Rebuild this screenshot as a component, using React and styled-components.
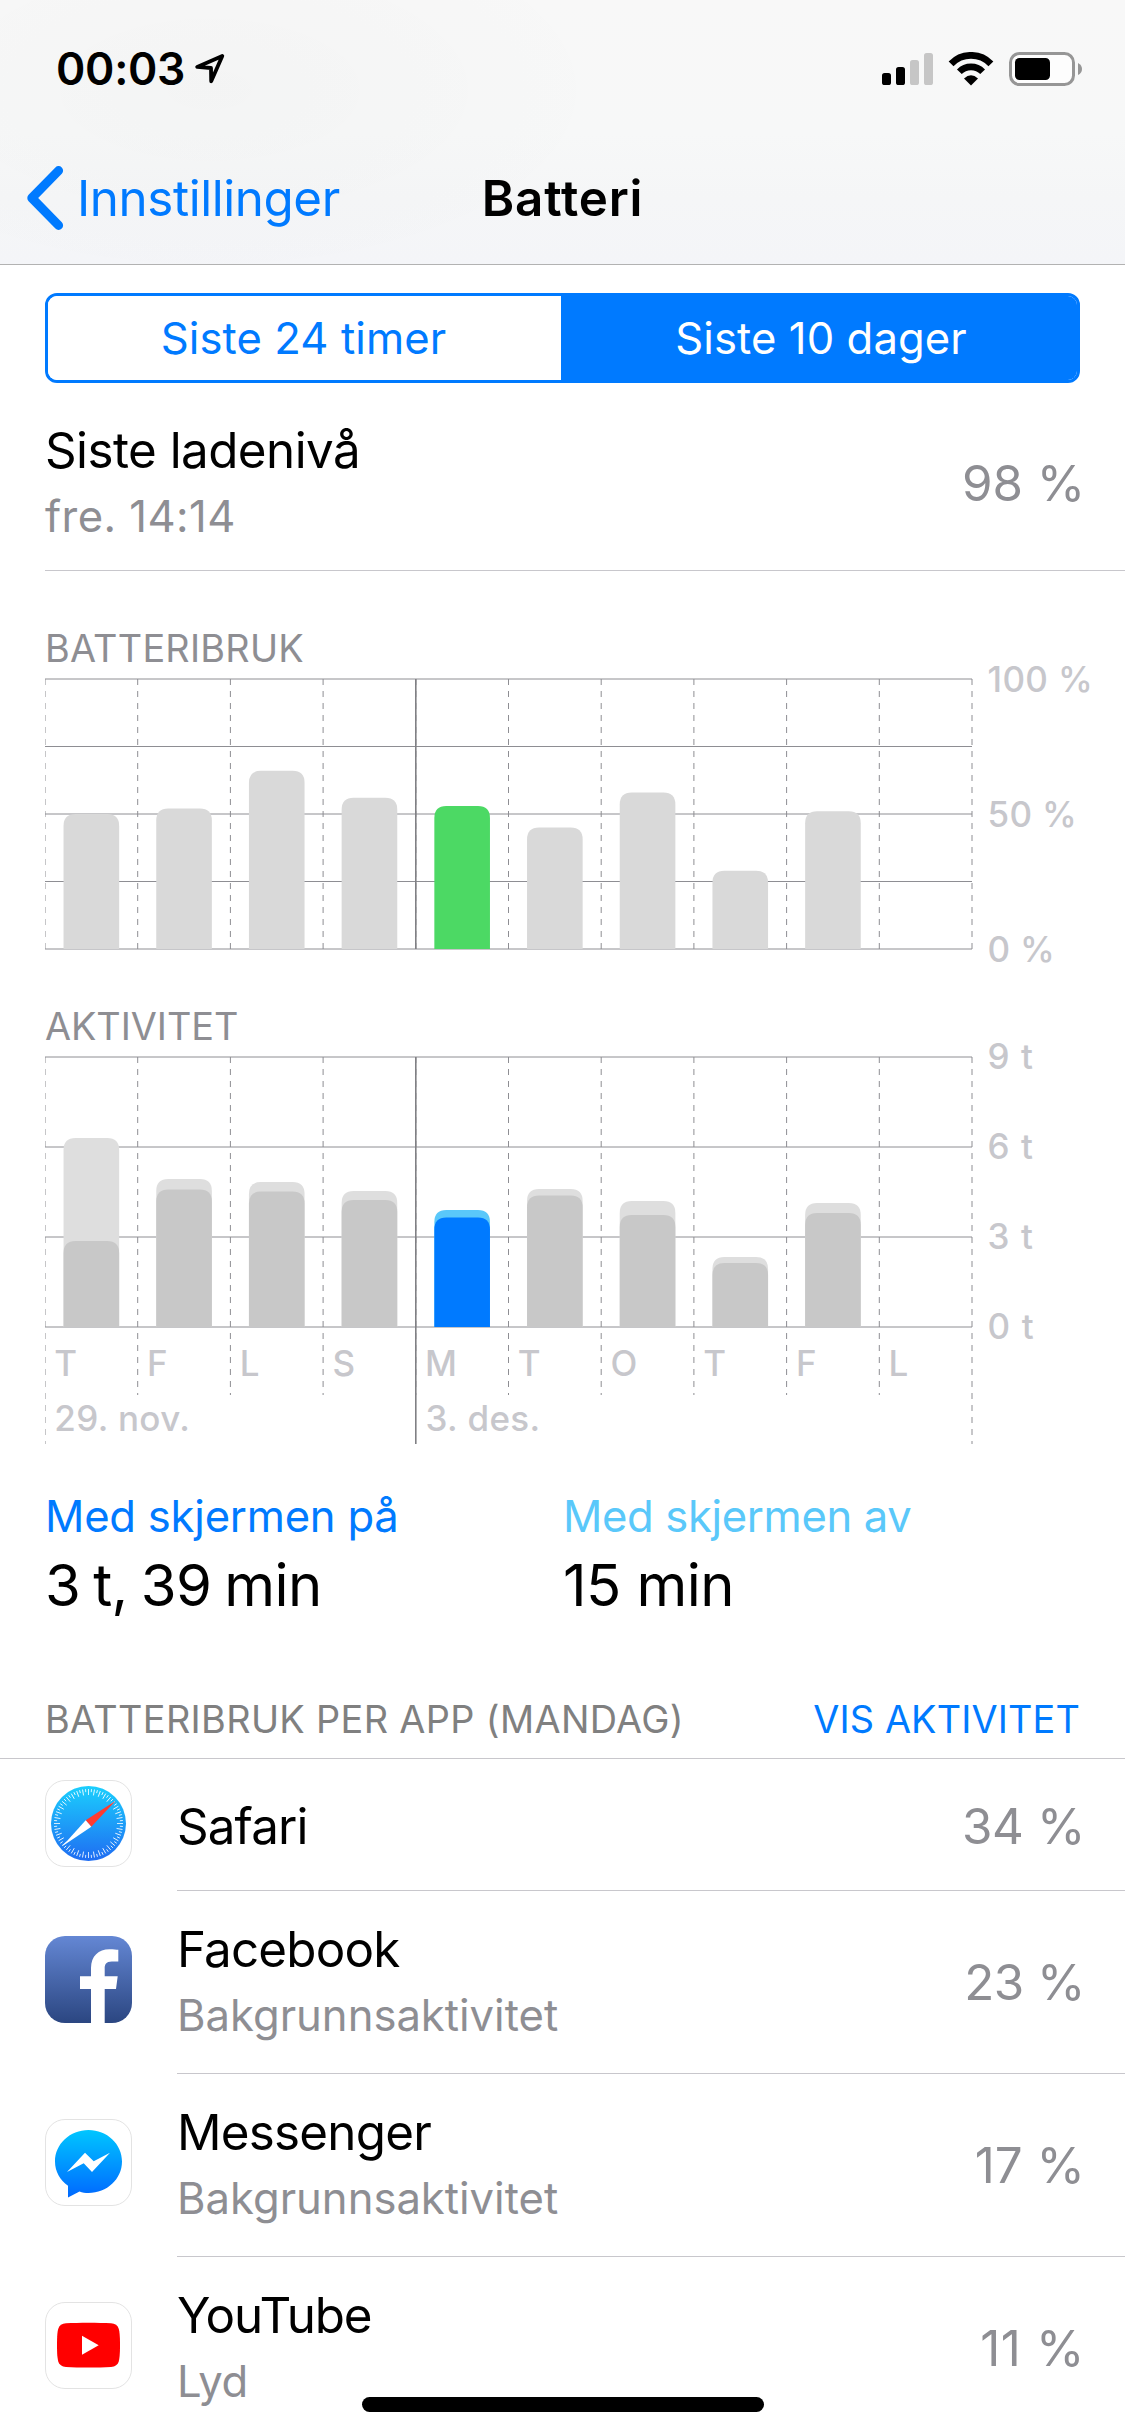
import React, { useState } from 'react'
import styled, { createGlobalStyle } from 'styled-components'

const GlobalStyle = createGlobalStyle`
  body {
    margin: 0;
    background: #fff;
    color: #000;
    font-family: Inter, "Liberation Sans", sans-serif;
  }
`

const Screen = styled.div`
  position: relative;
  width: 1125px;
  height: 2436px;
  overflow: hidden;
  background: #fff;
`

const Header = styled.header`
  border-bottom: 1px solid #b2b2b2;
  background:
    radial-gradient(ellipse 420px 200px at 210px 90px, rgba(0, 0, 0, 0.014), rgba(0, 0, 0, 0)),
    linear-gradient(#f8f8f8, #f7f8f8 50%, #f5f6f7 75%, #f4f5f8);
`

const StatusBar = styled.div`
  display: flex;
  align-items: center;
  height: 126px;
  padding: 6px 42px 0 56px;
`

const Time = styled.span`
  font-size: 44.5px;
  font-weight: 600;
  line-height: 54px;
  letter-spacing: -0.29px;
`

const LocationIcon = styled.svg`
  width: 32px;
  height: 32px;
  margin-left: 9px;
`

const StatusIcons = styled.div`
  display: flex;
  align-items: center;
  gap: 15px;
  margin-left: auto;

  svg {
    display: block;
  }
`

const NavBar = styled.nav`
  display: grid;
  grid-template-columns: 1fr auto 1fr;
  align-items: center;
  height: 132px;
  padding: 0 26px;
`

const BackButton = styled.a`
  display: flex;
  align-items: center;
  gap: 12px;
  color: #007aff;
  font-size: 49.3px;
  line-height: 60px;
  letter-spacing: -0.4px;
`

const NavTitle = styled.h1`
  margin: 0;
  font-size: 49.3px;
  font-weight: 600;
  line-height: 60px;
  letter-spacing: 0.85px;
`

const Segmented = styled.div`
  display: flex;
  box-sizing: border-box;
  height: 90px;
  margin: 28px 45px 0;
  border: 3px solid #007aff;
  border-radius: 12px;
  overflow: hidden;
`

const Segment = styled.button`
  flex: 1;
  padding: 2px 0 0 4px;
  border: 0;
  background: ${(p) => (p.$active ? '#007aff' : '#fff')};
  color: ${(p) => (p.$active ? '#fff' : '#007aff')};
  font-family: inherit;
  font-size: 43.6px;
  line-height: 82px;
  letter-spacing: 0.1px;

  &:first-child {
    flex: 0 0 513px;
    padding: 2px 2px 0 0;
  }
`

const LastCharge = styled.div`
  display: flex;
  justify-content: space-between;
  align-items: center;
  margin-left: 45px;
  padding: 37px 45px 25px 0;
  border-bottom: 1px solid #c8c7cc;
`

const Texts = styled.div`
  display: flex;
  flex-direction: column;
  gap: 9px;
`

const Title = styled.div`
  font-size: 49.3px;
  line-height: 60px;
  letter-spacing: ${(p) => p.$ls || 0}px;
`

const Subtitle = styled.div`
  color: #8e8e93;
  font-size: 43.6px;
  line-height: 56px;
  letter-spacing: ${(p) => p.$ls || 0}px;
`

const Percent = styled.div`
  margin-right: -5px;
  color: #8e8e93;
  font-size: 49.3px;
  line-height: 60px;
  letter-spacing: ${(p) => p.$ls || 0}px;
`

const ChartBlock = styled.section`
  padding: 53px 45px 0;
`

const ChartTitle = styled.h2`
  margin: 0 0 7px;
  color: #8e8e93;
  font-size: 37.8px;
  font-weight: 400;
  line-height: 48px;
  letter-spacing: ${(p) => p.$ls || 0}px;
`

const ChartSvg = styled.svg`
  display: block;
  width: 1080px;
  overflow: visible;

  text {
    fill: #c7c7cc;
    font-size: 35px;
    font-weight: 500;
    letter-spacing: 0.35px;
  }
`

const Stats = styled.div`
  display: grid;
  grid-template-columns: 518px 1fr;
  padding: 45px 45px 0;
`

const StatLabel = styled.div`
  color: ${(p) => p.$color};
  font-size: 43.6px;
  line-height: 56px;
  letter-spacing: ${(p) => p.$ls}px;
`

const StatValue = styled.div`
  margin-top: 5px;
  font-size: 58px;
  line-height: 70px;
  letter-spacing: ${(p) => p.$ls}px;
  word-spacing: ${(p) => p.$ws || 0}px;
`

const ListHeader = styled.div`
  display: flex;
  justify-content: space-between;
  padding: 75px 45px 15px;
  border-bottom: 1px solid #c8c7cc;
  color: #808080;
  font-size: 37.8px;
  line-height: 48px;
  letter-spacing: 0.36px;
`

const ListAction = styled.a`
  color: #007aff;
  letter-spacing: 0.15px;
`

const AppRow = styled.div`
  display: flex;
  align-items: center;
  height: ${(p) => (p.$tall ? 183 : 132)}px;
  padding-left: 45px;

  > svg {
    flex: none;
    margin-bottom: ${(p) => (p.$tall ? 6 : 3)}px;
  }
`

const AppBody = styled.div`
  display: flex;
  flex: 1;
  align-items: center;
  justify-content: space-between;
  box-sizing: border-box;
  height: 100%;
  margin-left: 45px;
  padding-right: 45px;
  border-bottom: 1px solid #c8c7cc;

  ${Texts} {
    margin-bottom: ${(p) => (p.$tall ? 1 : 0)}px;
    margin-top: ${(p) => (p.$tall ? 0 : 3)}px;
  }

  ${Percent} {
    margin-top: ${(p) => (p.$tall ? 0 : 3)}px;
  }
`

const HomeIndicator = styled.div`
  position: absolute;
  left: 362px;
  bottom: 24px;
  width: 402px;
  height: 15px;
  border-radius: 8px;
  background: #000;
`

const COL = 92.7
const BAR = COL * 0.6
const WIDTH = COL * 10
const CHART_H = 270

// percent per day
const usage = [50, 52, 66, 56, 53, 45, 58, 29, 51]

// minutes per day: [screen on, total]
const activity = [
  [172, 378],
  [275, 296],
  [271, 290],
  [254, 272],
  [219, 234],
  [263, 276],
  [224, 252],
  [128, 140],
  [228, 248],
]

const days = ['T', 'F', 'L', 'S', 'M', 'T', 'O', 'T', 'F', 'L']
const SELECTED = 4

function Bar({ index, height, fill }) {
  const x = COL * index + COL * 0.2
  const y = CHART_H - height
  const r = 12
  return (
    <path
      fill={fill}
      d={`M${x} ${CHART_H}V${y + r}Q${x} ${y} ${x + r} ${y}H${x + BAR - r}Q${x + BAR} ${y} ${x + BAR} ${y + r}V${CHART_H}Z`}
    />
  )
}

function Grid({ rows, dayEnd, edgeEnd }) {
  return (
    <g stroke="#8e8e93" strokeWidth="1">
      {Array.from({ length: rows + 1 }, (_, i) => {
        const y = (CHART_H / rows) * i
        return <line key={`h${i}`} x1="0" x2={WIDTH} y1={y} y2={y} />
      })}
      {Array.from({ length: 11 }, (_, i) => (
        <line
          key={`v${i}`}
          x1={COL * i || 0.5}
          x2={COL * i || 0.5}
          y1="0"
          y2={i === 0 || i === 10 ? edgeEnd : dayEnd}
          strokeDasharray="6 6"
          opacity={i === 0 ? 0.5 : 1}
        />
      ))}
      <line x1={COL * SELECTED} x2={COL * SELECTED} y1="0" y2={edgeEnd} stroke="#808084" strokeWidth="1.6" />
    </g>
  )
}

function UsageChart() {
  return (
    <ChartSvg height="270">
      <Grid rows={4} dayEnd={270} edgeEnd={270} />
      {usage.map((v, i) => (
        <Bar key={i} index={i} height={v * 2.7} fill={i === SELECTED ? '#4cd964' : '#d9d9d9'} />
      ))}
      <text x="942.5" y="12.5">100 %</text>
      <text x="942.5" y="147.5">50 %</text>
      <text x="942.5" y="282.5">0 %</text>
    </ChartSvg>
  )
}

function ActivityChart() {
  return (
    <ChartSvg height="387">
      <Grid rows={3} dayEnd={338} edgeEnd={387} />
      {activity.map(([on, total], i) => (
        <g key={i}>
          <Bar index={i} height={total / 2} fill={i === SELECTED ? '#5ac8fa' : '#dedede'} />
          <Bar index={i} height={on / 2} fill={i === SELECTED ? '#007aff' : '#c8c8c8'} />
        </g>
      ))}
      {[9, 6, 3, 0].map((h, i) => (
        <text key={h} x="942.5" y={i * 90 + 12} wordSpacing="1.5">{h} t</text>
      ))}
      {days.map((d, i) => (
        <text key={i} x={COL * i + 9.3} y="319">{d}</text>
      ))}
      <text x="9.3" y="374">29. nov.</text>
      <text x={COL * SELECTED + 9.8} y="374">3. des.</text>
    </ChartSvg>
  )
}

function IconFrame() {
  return <rect x="0.5" y="0.5" width="86" height="86" rx="19.5" fill="#fff" stroke="#e3e3e3" />
}

function SafariIcon() {
  return (
    <svg width="87" height="87" viewBox="0 0 87 87">
      <defs>
        <linearGradient id="safari" x1="0" y1="0" x2="0" y2="1">
          <stop offset="0" stopColor="#1bcffd" />
          <stop offset="1" stopColor="#1f6cf2" />
        </linearGradient>
      </defs>
      <IconFrame />
      <circle cx="43.5" cy="43.5" r="37.5" fill="url(#safari)" />
      <g stroke="#fff" strokeWidth="0.8">
        {Array.from({ length: 72 }, (_, i) => (
          <line
            key={i}
            x1="43.5"
            x2="43.5"
            y1="9"
            y2={i % 2 ? 12 : 15}
            transform={`rotate(${i * 5} 43.5 43.5)`}
          />
        ))}
      </g>
      <path d="M70.7 20.7L40.7 40.3L46.3 46.7Z" fill="#ff3b30" />
      <path d="M17.3 66.3L40.7 40.3L46.3 46.7Z" fill="#fff" />
    </svg>
  )
}

function FacebookIcon() {
  return (
    <svg width="87" height="87" viewBox="0 0 87 87">
      <defs>
        <linearGradient id="facebook" x1="0" y1="0" x2="0" y2="1">
          <stop offset="0" stopColor="#6487d4" />
          <stop offset="1" stopColor="#2b4681" />
        </linearGradient>
      </defs>
      <rect width="87" height="87" rx="20" fill="url(#facebook)" />
      <path
        fill="#fff"
        d="M46 87V53H35V40.3H46V32C46 20 53.5 13.2 64.5 13.2C68.5 13.2 71.5 13.5 73.3 13.8V25.6H66.8C61 25.6 59.7 28.5 59.7 32.5V40.3H72.7L71 53H59.7V87Z"
      />
    </svg>
  )
}

function MessengerIcon() {
  return (
    <svg width="87" height="87" viewBox="0 0 87 87">
      <defs>
        <linearGradient id="messenger" x1="0" y1="0" x2="0" y2="1">
          <stop offset="0" stopColor="#00c6ff" />
          <stop offset="1" stopColor="#0068ff" />
        </linearGradient>
      </defs>
      <IconFrame />
      <path
        fill="url(#messenger)"
        d="M43.5 11C62 11 77 25 77 42.5S62 74 43.5 74C40.3 74 37.3 73.5 34.5 72.5L23 78.6V66.8C15 61 10 52.5 10 42.5C10 25 25 11 43.5 11Z"
      />
      <path fill="#fff" d="M22 53L40 33.7L48.7 42.2L65 33.7L47 53L38.7 44.3Z" />
    </svg>
  )
}

function YouTubeIcon() {
  return (
    <svg width="87" height="87" viewBox="0 0 87 87">
      <IconFrame />
      <path
        fill="#f00"
        d="M12 43.1C12 34 12.4 30 13.2 27C14.2 23.3 17 21.6 21 21.3C34 20.5 53 20.5 66 21.3C70 21.6 72.8 23.3 73.8 27C74.6 30 75 34 75 43.1S74.6 56.2 73.8 59.2C72.8 62.9 70 64.6 66 64.9C53 65.7 34 65.7 21 64.9C17 64.6 14.2 62.9 13.2 59.2C12.4 56.2 12 52.2 12 43.1Z"
      />
      <path fill="#fff" d="M37 33.7L53.7 43.3L37 52.7Z" />
    </svg>
  )
}

const apps = [
  { name: 'Safari', ls: -0.85, percent: '34 %', pls: -0.4, icon: SafariIcon },
  { name: 'Facebook', ls: -0.8, note: 'Bakgrunnsaktivitet', percent: '23 %', pls: -0.5, icon: FacebookIcon },
  { name: 'Messenger', ls: -0.75, note: 'Bakgrunnsaktivitet', percent: '17 %', pls: 0, icon: MessengerIcon },
  { name: 'YouTube', ls: -1.1, note: 'Lyd', nls: -0.4, percent: '11 %', pls: 0.6, icon: YouTubeIcon },
]

function Signal() {
  const heights = [12, 18, 25, 32]
  return (
    <svg width="51" height="34" viewBox="0 0 51 34">
      {heights.map((h, i) => (
        <rect key={h} x={i * 14} y={33 - h} width="9" height={h} rx="2.6" fill={i < 2 ? '#000' : '#c6c6c6'} />
      ))}
    </svg>
  )
}

function Wifi() {
  return (
    <svg width="46" height="34" viewBox="0 0 46 34">
      <g fill="none" stroke="#000">
        <path strokeWidth="6.8" d="M3.1 11.8A27.7 27.7 0 0 1 42.9 11.8" />
        <path strokeWidth="6.6" d="M11.35 19.8A16.2 16.2 0 0 1 34.65 19.8" />
      </g>
      <path d="M16 26.4Q23 20.2 30 26.4L23 33.6Z" />
    </svg>
  )
}

function Battery() {
  return (
    <svg width="74" height="34" viewBox="0 0 74 34">
      <rect x="1.5" y="1.5" width="63" height="31" rx="9" fill="#fdfdfd" stroke="#969696" strokeWidth="3" />
      <rect x="6" y="6" width="35" height="22" rx="4.5" />
      <path d="M69 11Q73 13 73 17T69 23Z" fill="#969696" />
    </svg>
  )
}

function App() {
  const [range, setRange] = useState('10d')

  return (
    <Screen>
      <GlobalStyle />
      <Header>
        <StatusBar>
          <Time>00:03</Time>
          <LocationIcon viewBox="0 0 32 32">
            <path
              d="M28.3 3L3.2 13.9L17 15L17.2 28.3Z"
              fill="none"
              stroke="#000"
              strokeWidth="3.8"
              strokeLinejoin="round"
            />
          </LocationIcon>
          <StatusIcons>
            <Signal />
            <Wifi />
            <Battery />
          </StatusIcons>
        </StatusBar>
        <NavBar>
          <BackButton>
            <svg width="39" height="66" viewBox="0 0 39 66">
              <path
                d="M32.6 5.6L5.8 33L32.6 60.4"
                fill="none"
                stroke="#007aff"
                strokeWidth="9"
                strokeLinecap="round"
                strokeLinejoin="round"
              />
            </svg>
            Innstillinger
          </BackButton>
          <NavTitle>Batteri</NavTitle>
        </NavBar>
      </Header>

      <Segmented>
        <Segment $active={range === '24h'} onClick={() => setRange('24h')}>Siste 24 timer</Segment>
        <Segment $active={range === '10d'} onClick={() => setRange('10d')}>Siste 10 dager</Segment>
      </Segmented>

      <LastCharge>
        <Texts>
          <Title $ls={-0.53}>Siste ladenivå</Title>
          <Subtitle $ls={0.45}>fre. 14:14</Subtitle>
        </Texts>
        <Percent $ls={-0.1}>98 %</Percent>
      </LastCharge>

      <ChartBlock>
        <ChartTitle $ls={0.25}>BATTERIBRUK</ChartTitle>
        <UsageChart />
      </ChartBlock>
      <ChartBlock>
        <ChartTitle $ls={-0.05}>AKTIVITET</ChartTitle>
        <ActivityChart />
      </ChartBlock>

      <Stats>
        <div>
          <StatLabel $color="#007aff" $ls={-0.23}>Med skjermen på</StatLabel>
          <StatValue $ls={-0.5} $ws={-3}>3 t, 39 min</StatValue>
        </div>
        <div>
          <StatLabel $color="#5ac8fa" $ls={-0.35}>Med skjermen av</StatLabel>
          <StatValue $ls={-0.54}>15 min</StatValue>
        </div>
      </Stats>

      <ListHeader>
        <span>BATTERIBRUK PER APP (MANDAG)</span>
        <ListAction>VIS AKTIVITET</ListAction>
      </ListHeader>

      {apps.map(({ name, ls, note, nls, percent, pls, icon: Icon }) => (
        <AppRow key={name} $tall={!!note}>
          <Icon />
          <AppBody $tall={!!note}>
            <Texts>
              <Title $ls={ls}>{name}</Title>
              {note && <Subtitle $ls={nls}>{note}</Subtitle>}
            </Texts>
            <Percent $ls={pls}>{percent}</Percent>
          </AppBody>
        </AppRow>
      ))}

      <HomeIndicator />
    </Screen>
  )
}

export default App
